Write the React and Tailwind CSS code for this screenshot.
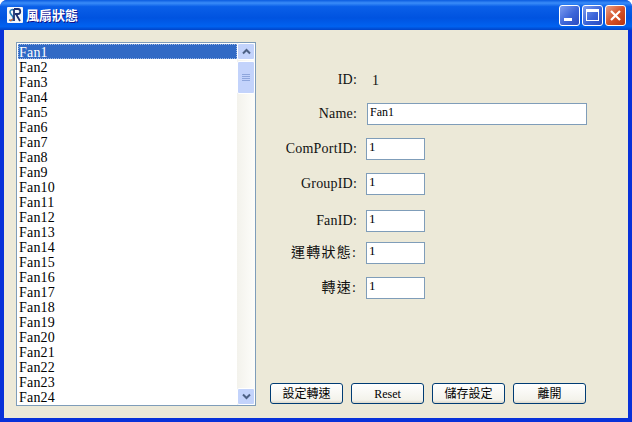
const fans = Array.from({ length: 24 }, (_, i) => `Fan${i + 1}`);
const serif = "font-['Liberation_Serif','Noto_Sans_CJK_TC',serif]";

function Logo() {
  return (
    <svg width="16" height="16" viewBox="0 0 16 16">
      <rect width="16" height="16" rx="1" fill="#f4f7fb" />
      <path d="M2 13c3 1 5 0 4-3C5 8 3 7 3 5c0-2 2-3 4-2" fill="none" stroke="#2a7fb8" strokeWidth="1.6" />
      <path d="M7 2h4c3 0 3 5 0 5H8M9 7l4 7M7 2v12" fill="none" stroke="#1b2f70" strokeWidth="1.8" />
      <path d="M3 14l3-2" stroke="#d9622b" strokeWidth="1.4" />
    </svg>
  );
}

function WinBtn({ red, children }) {
  return (
    <div className={`w-[21px] h-[21px] rounded-[3px] border border-white flex items-center justify-center ${red ? "bg-[linear-gradient(135deg,#e8a088,#d6532a_50%,#b8340f)]" : "bg-[linear-gradient(135deg,#7d9df0,#3b64d8_55%,#2a4bc0)]"}`}>
      {children}
    </div>
  );
}

function Row({ label, mt, track = "tracking-[0.2px]", children }) {
  return (
    <div className={`flex items-center h-[22px] ${mt}`}>
      <div className={`w-[103px] text-right text-[14px] leading-none ${track} text-[#111] shrink-0 ${serif}`}>{label}</div>
      {children}
    </div>
  );
}

function Field({ value, w = "w-[59px]", ml = "ml-[9px]", size = "text-[13px]" }) {
  return (
    <div className={`${w} ${ml} h-[22px] bg-white border border-[#7f9db9] pl-[2px] pt-[1px] ${size} leading-[14px] text-black ${serif}`}>{value}</div>
  );
}

function Btn({ children }) {
  return (
    <div className={`w-[73px] h-[21px] rounded-[3px] border border-[#003c74] bg-[linear-gradient(180deg,#ffffff,#f3f2ea_85%,#dcd8cb)] flex items-center justify-center text-[12px] text-black ${serif}`}>
      {children}
    </div>
  );
}

function ScrollBtn({ down }) {
  return (
    <div className="h-[17px] rounded-[2px] border border-white bg-[#c3d3fb] flex items-center justify-center">
      <svg width="9" height="7" viewBox="0 0 9 7">
        <path d={down ? "M1 1.5l3.5 3.5L8 1.5" : "M1 5.5L4.5 2 8 5.5"} fill="none" stroke="#4d6185" strokeWidth="2" />
      </svg>
    </div>
  );
}

export default function App() {
  return (
    <div className="w-[632px] h-[422px] flex flex-col overflow-hidden rounded-t-[7px] bg-[#0831d9]">
      <div className="h-[30px] shrink-0 flex items-center pl-[7px] pr-[6px] bg-[linear-gradient(180deg,#0a5be0_0%,#3a8cf8_10%,#0a5fe8_22%,#0053e0_60%,#0062f0_88%,#0044c8_100%)]">
        <Logo />
        <span className="ml-[3px] text-[13px] font-bold text-white font-['Noto_Sans_CJK_TC',sans-serif] [text-shadow:1px_1px_#0f1089]">風扇狀態</span>
        <div className="ml-auto flex gap-[2px]">
          <WinBtn><div className="w-[8px] h-[3px] bg-white mt-[9px] -ml-[4px]" /></WinBtn>
          <WinBtn><div className="w-[13px] h-[12px] border border-white border-t-[3px]" /></WinBtn>
          <WinBtn red>
            <svg width="13" height="13" viewBox="0 0 13 13"><path d="M2 2l9 9M11 2l-9 9" stroke="#fff" strokeWidth="2.2" /></svg>
          </WinBtn>
        </div>
      </div>

      <div className="mx-[4px] h-[388px] shrink-0 bg-[#ece9d8] flex pl-[12px] pt-[12px]">
        <div className="w-[240px] h-[364px] shrink-0 border border-[#7f9db9] bg-white flex overflow-hidden">
          <div className={`flex-1 pt-[1px] pl-[1px] text-[14px] tracking-[0.2px] text-black ${serif}`}>
            {fans.map((f, i) => (
              <div key={f} className={`h-[15px] leading-[17px] pl-[1px] ${i === 0 ? "bg-[#316ac5] text-white outline-1 -outline-offset-1 outline-dotted outline-[#9db6e0]" : ""}`}>{f}</div>
            ))}
          </div>
          <div className="w-[18px] shrink-0 bg-[linear-gradient(90deg,#f3f2ec,#fdfdfa)] flex flex-col">
            <ScrollBtn />
            <div className="h-[33px] mt-[1px] rounded-[2px] border border-white bg-[#c3d3fb] flex flex-col items-center justify-center gap-[1px]">
              {[0, 1, 2, 3].map((n) => <div key={n} className="w-[8px] h-[1px] bg-[#8ea6dc]" />)}
            </div>
            <div className="flex-1" />
            <ScrollBtn down />
          </div>
        </div>

        <div className="ml-[-1px] w-[333px] flex flex-col">
          <div className="flex-1 flex flex-col ml-[-1px]">
            <Row label="ID:" mt="mt-[27px]">
              <span className={`ml-[15px] text-[14px] text-[#111] ${serif}`}>1</span>
            </Row>
            <Row label="Name:" mt="mt-[12px]">
              <Field value="Fan1" w="w-[220px]" ml="ml-[10px]" size="text-[12px]" />
            </Row>
            <Row label="ComPortID:" mt="mt-[13px]"><Field value="1" /></Row>
            <Row label="GroupID:" mt="mt-[13px]"><Field value="1" /></Row>
            <Row label="FanID:" mt="mt-[15px]"><Field value="1" /></Row>
            <Row label="運轉狀態:" mt="mt-[10px]" track="tracking-[1.2px]"><Field value="1" /></Row>
            <Row label="轉速:" mt="mt-[13px]" track="tracking-[1.2px]"><Field value="1" /></Row>
          </div>
          <div className="flex gap-[8px] pl-[15px] mb-[14px]">
            <Btn>設定轉速</Btn>
            <Btn>Reset</Btn>
            <Btn>儲存設定</Btn>
            <Btn>離開</Btn>
          </div>
        </div>
      </div>
    </div>
  );
}
